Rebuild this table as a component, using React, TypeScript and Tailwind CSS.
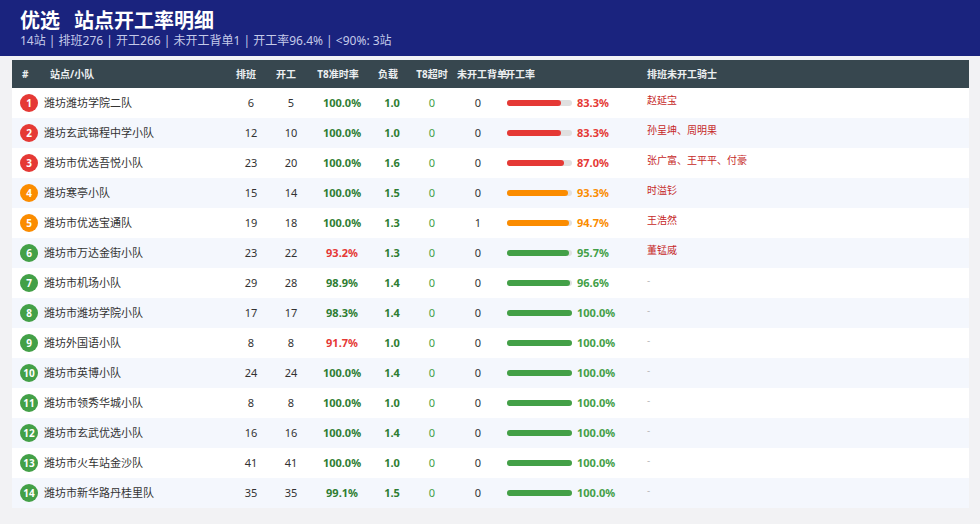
type Row = {
  name: string;
  plan: number;
  started: number;
  t8: number;
  load: string;
  t8Late: number;
  backlog: number;
  rate: number;
  riders: string;
};

const ROWS: Row[] = [
  { name: "潍坊潍坊学院二队", plan: 6, started: 5, t8: 100.0, load: "1.0", t8Late: 0, backlog: 0, rate: 83.3, riders: "赵延宝" },
  { name: "潍坊玄武锦程中学小队", plan: 12, started: 10, t8: 100.0, load: "1.0", t8Late: 0, backlog: 0, rate: 83.3, riders: "孙呈坤、周明果" },
  { name: "潍坊市优选吾悦小队", plan: 23, started: 20, t8: 100.0, load: "1.6", t8Late: 0, backlog: 0, rate: 87.0, riders: "张广富、王平平、付豪" },
  { name: "潍坊寒亭小队", plan: 15, started: 14, t8: 100.0, load: "1.5", t8Late: 0, backlog: 0, rate: 93.3, riders: "时溢钐" },
  { name: "潍坊市优选宝通队", plan: 19, started: 18, t8: 100.0, load: "1.3", t8Late: 0, backlog: 1, rate: 94.7, riders: "王浩然" },
  { name: "潍坊市万达金街小队", plan: 23, started: 22, t8: 93.2, load: "1.3", t8Late: 0, backlog: 0, rate: 95.7, riders: "董锰威" },
  { name: "潍坊市机场小队", plan: 29, started: 28, t8: 98.9, load: "1.4", t8Late: 0, backlog: 0, rate: 96.6, riders: "" },
  { name: "潍坊市潍坊学院小队", plan: 17, started: 17, t8: 98.3, load: "1.4", t8Late: 0, backlog: 0, rate: 100.0, riders: "" },
  { name: "潍坊外国语小队", plan: 8, started: 8, t8: 91.7, load: "1.0", t8Late: 0, backlog: 0, rate: 100.0, riders: "" },
  { name: "潍坊市英博小队", plan: 24, started: 24, t8: 100.0, load: "1.4", t8Late: 0, backlog: 0, rate: 100.0, riders: "" },
  { name: "潍坊市领秀华城小队", plan: 8, started: 8, t8: 100.0, load: "1.0", t8Late: 0, backlog: 0, rate: 100.0, riders: "" },
  { name: "潍坊市玄武优选小队", plan: 16, started: 16, t8: 100.0, load: "1.4", t8Late: 0, backlog: 0, rate: 100.0, riders: "" },
  { name: "潍坊市火车站金沙队", plan: 41, started: 41, t8: 100.0, load: "1.0", t8Late: 0, backlog: 0, rate: 100.0, riders: "" },
  { name: "潍坊市新华路丹桂里队", plan: 35, started: 35, t8: 99.1, load: "1.5", t8Late: 0, backlog: 0, rate: 100.0, riders: "" },
];

const GRID = "grid grid-cols-[30px_186px_46px_34px_68px_32px_48px_44px_140px_1fr]";

function rateTone(rate: number) {
  if (rate < 90) return { bg: "bg-[#e53935]", text: "text-[#e53935]" };
  if (rate < 95) return { bg: "bg-[#fb8c00]", text: "text-[#fb8c00]" };
  return { bg: "bg-[#43a047]", text: "text-[#43a047]" };
}

function TableRow({ row, index }: { row: Row; index: number }) {
  const tone = rateTone(row.rate);
  const t8Color = row.t8 < 95 ? "text-[#e53935]" : "text-[#2e7d32]";
  const stripe = index % 2 === 1 ? "bg-[#f4f7fd]" : "bg-white";

  return (
    <div className={`${GRID} h-[30px] items-center text-[11px] text-[#333] ${stripe}`}>
      <div className="pl-[8px]">
        <div
          className={`flex h-[18px] w-[18px] items-center justify-center rounded-full text-[10px] font-bold text-white ${tone.bg}`}
        >
          {index + 1}
        </div>
      </div>
      <div className="truncate pl-[2px]">{row.name}</div>
      <div className="text-center">{row.plan}</div>
      <div className="text-center">{row.started}</div>
      <div className={`text-center font-bold ${t8Color}`}>{row.t8.toFixed(1)}%</div>
      <div className="text-center font-bold text-[#2e7d32]">{row.load}</div>
      <div className="text-center text-[#43a047]">{row.t8Late}</div>
      <div className="text-center">{row.backlog}</div>
      <div className="flex items-center pl-[7px]">
        <div className="h-[6px] w-[65px] rounded-full bg-[#e0e0e0]">
          <div className={`h-full rounded-full ${tone.bg}`} style={{ width: `${row.rate}%` }} />
        </div>
        <span className={`ml-[5px] font-bold ${tone.text}`}>{row.rate.toFixed(1)}%</span>
      </div>
      <div className="self-start pl-[7px] pt-[5px] text-[10px] leading-[14px]">
        {row.riders ? (
          <span className="text-[#c62828]">{row.riders}</span>
        ) : (
          <span className="text-[#bdbdbd]">-</span>
        )}
      </div>
    </div>
  );
}

export default function App() {
  return (
    <div
      className="h-[524px] w-[980px] overflow-hidden bg-[#f2f2f4]"
      style={{ fontFamily: '"Noto Sans", "Noto Sans CJK SC", sans-serif' }}
    >
      <div className="h-[56px] bg-[#1a237e] pl-[20px] pt-[9px]">
        <div className="text-[20px] font-bold leading-[24px] text-white">
          <span className="mr-[14px]">优选</span>站点开工率明细
        </div>
        <div className="text-[12px] leading-[15px] text-[#c5cae9]">
          14站 | 排班276 | 开工266 | 未开工背单1 | 开工率96.4% | &lt;90%: 3站
        </div>
      </div>

      <div className="px-[12px] pt-[4px]">
        <div className="w-[957px]">
          <div className={`${GRID} h-[28px] items-center whitespace-nowrap bg-[#37474f] text-[10px] font-bold text-[#eceff1]`}>
            <div className="pl-[10px]">#</div>
            <div className="pl-[8px]">站点/小队</div>
            <div className="pr-[10px] text-center">排班</div>
            <div className="pr-[10px] text-center">开工</div>
            <div className="pr-[8px] text-center">T8准时率</div>
            <div className="pr-[8px] text-center">负载</div>
            <div className="text-center">T8超时</div>
            <div className="pl-[1px]">未开工背单</div>
            <div className="pl-[5px]">开工率</div>
            <div className="pl-[7px]">排班未开工骑士</div>
          </div>
          {ROWS.map((row, i) => (
            <TableRow key={row.name} row={row} index={i} />
          ))}
        </div>
      </div>
    </div>
  );
}
